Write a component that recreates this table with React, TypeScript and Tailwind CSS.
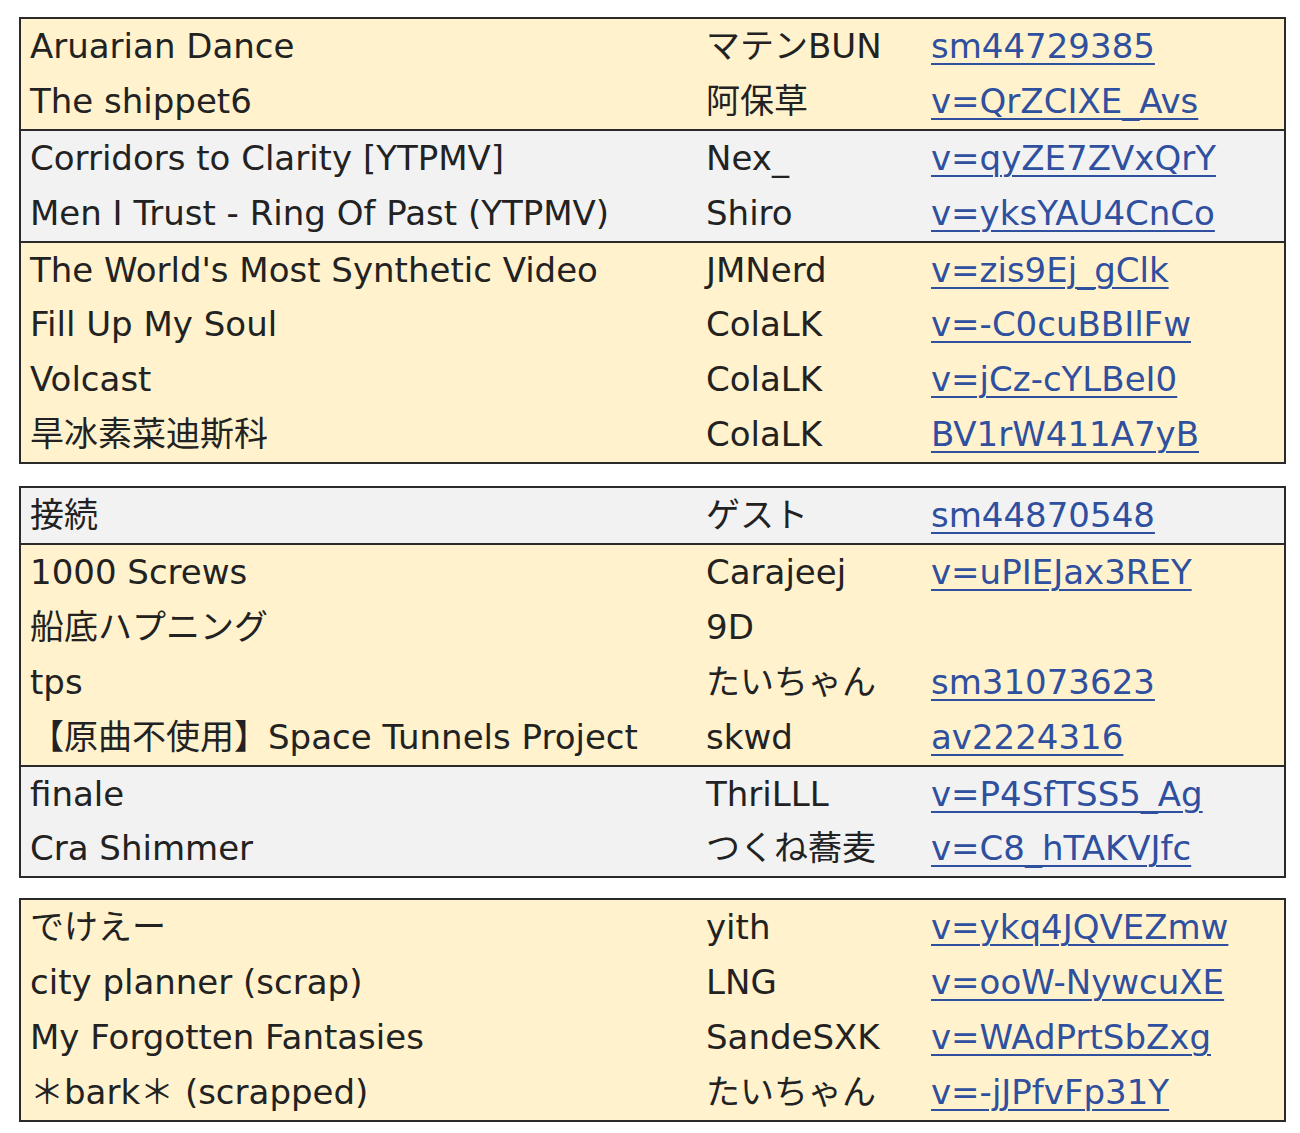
type Row = [string, string, string];

interface Group {
  tone: "yellow" | "gray";
  rows: Row[];
}

const tables: { mt: string; groups: Group[] }[] = [
  {
    mt: "mt-0",
    groups: [
      {
        tone: "yellow",
        rows: [
          ["Aruarian Dance", "マテンBUN", "sm44729385"],
          ["The shippet6", "阿保草", "v=QrZCIXE_Avs"],
        ],
      },
      {
        tone: "gray",
        rows: [
          ["Corridors to Clarity [YTPMV]", "Nex_", "v=qyZE7ZVxQrY"],
          ["Men I Trust - Ring Of Past (YTPMV)", "Shiro", "v=yksYAU4CnCo"],
        ],
      },
      {
        tone: "yellow",
        rows: [
          ["The World's Most Synthetic Video", "JMNerd", "v=zis9Ej_gClk"],
          ["Fill Up My Soul", "ColaLK", "v=-C0cuBBIlFw"],
          ["Volcast", "ColaLK", "v=jCz-cYLBeI0"],
          ["旱冰素菜迪斯科", "ColaLK", "BV1rW411A7yB"],
        ],
      },
    ],
  },
  {
    mt: "mt-[22px]",
    groups: [
      { tone: "gray", rows: [["接続", "ゲスト", "sm44870548"]] },
      {
        tone: "yellow",
        rows: [
          ["1000 Screws", "Carajeej", "v=uPIEJax3REY"],
          ["船底ハプニング", "9D", ""],
          ["tps", "たいちゃん", "sm31073623"],
          ["【原曲不使用】Space Tunnels Project", "skwd", "av2224316"],
        ],
      },
      {
        tone: "gray",
        rows: [
          ["finale", "ThriLLL", "v=P4SfTSS5_Ag"],
          ["Cra Shimmer", "つくね蕎麦", "v=C8_hTAKVJfc"],
        ],
      },
    ],
  },
  {
    mt: "mt-[20px]",
    groups: [
      {
        tone: "yellow",
        rows: [
          ["でけえー", "yith", "v=ykq4JQVEZmw"],
          ["city planner (scrap)", "LNG", "v=ooW-NywcuXE"],
          ["My Forgotten Fantasies", "SandeSXK", "v=WAdPrtSbZxg"],
          ["＊bark＊ (scrapped)", "たいちゃん", "v=-jJPfvFp31Y"],
        ],
      },
    ],
  },
];

export default function App() {
  return (
    <div className="min-h-screen bg-white pl-[19px] pr-[14px] pt-[17px] font-['DejaVu_Sans','Noto_Sans_CJK_JP',sans-serif] text-[34px] text-[#222]">
      {tables.map((table, ti) => (
        <div key={ti} className={`${table.mt} border-2 border-[#2a2a2a]`}>
          {table.groups.map((group, gi) => (
            <div
              key={gi}
              className={`${gi > 0 ? "border-t-2 border-[#2a2a2a]" : ""} ${
                group.tone === "yellow" ? "bg-[#fff2cc]" : "bg-[#f2f2f2]"
              }`}
            >
              {group.rows.map((row, ri) => (
                <div key={ri} className="grid h-[54.9px] grid-cols-[676px_225px_1fr] items-center">
                  <span className="whitespace-nowrap pl-[9px]">{row[0]}</span>
                  <span className="whitespace-nowrap pl-[9px]">{row[1]}</span>
                  <span className="whitespace-nowrap pl-[9px]">
                    {row[2] && (
                      <a className="text-[#2f4f9f] underline decoration-2 underline-offset-[5px]">{row[2]}</a>
                    )}
                  </span>
                </div>
              ))}
            </div>
          ))}
        </div>
      ))}
    </div>
  );
}
